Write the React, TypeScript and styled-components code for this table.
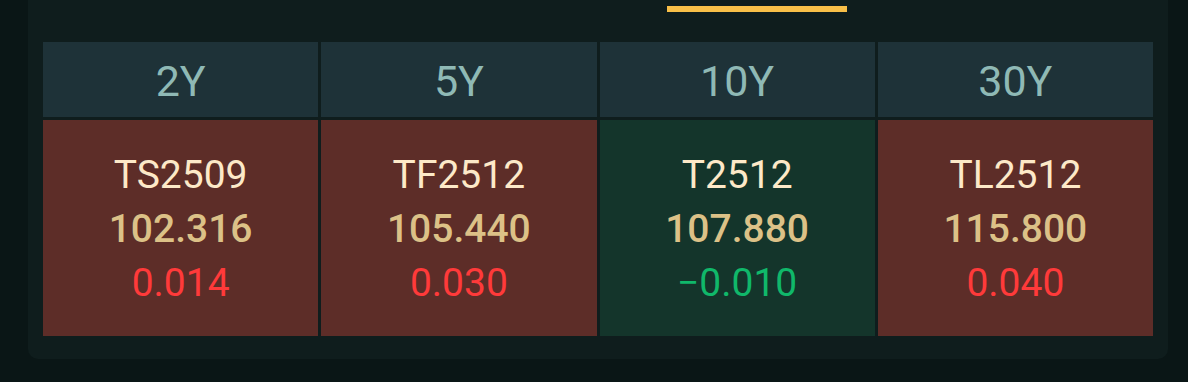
import React from "react";
import styled, { createGlobalStyle } from "styled-components";

const GlobalStyle = createGlobalStyle`
  html, body {
    margin: 0;
    padding: 0;
    background: #0a1616;
    overflow: hidden;
  }
  body {
    font-family: Roboto, "Noto Sans", "Liberation Sans", sans-serif;
  }
`;

const Page = styled.div`
  width: 1188px;
  height: 382px;
  background: #0a1616;
  padding: 0 20px 0 28px;
  box-sizing: border-box;
  overflow: hidden;
`;

const Card = styled.section`
  margin-top: -20px;
  background: #0f1d1d;
  border-radius: 10px;
  padding: 0 15px 23px;
`;

const TabBar = styled.div`
  height: 32px;
  display: flex;
  align-items: flex-end;
  padding-left: 624px;
`;

const Indicator = styled.div`
  width: 180px;
  height: 6px;
  background: #f8bf48;
`;

const Grid = styled.div`
  margin-top: 30px;
  display: grid;
  grid-template-columns: repeat(4, 1fr);
  grid-template-rows: 75px 216px;
  gap: 3px;
`;

const HeadCell = styled.div`
  background: #1e3238;
  display: flex;
  align-items: center;
  justify-content: center;
  font-family: Roboto, "Noto Sans", sans-serif;
  font-size: 43px;
  font-weight: 400;
  color: #8fb9b5;
  padding-top: 2px;
  box-sizing: border-box;
`;

const BodyCell = styled.div<{ $up: boolean }>`
  background: ${(p) => (p.$up ? "#5d2d28" : "#14352b")};
  display: flex;
  flex-direction: column;
  align-items: center;
  justify-content: center;
  line-height: 54px;
  font-size: 39px;
  padding-top: 2px;
  box-sizing: border-box;
`;

const Code = styled.div`
  color: #fde9c8;
  font-weight: 400;
`;

const Price = styled.div`
  color: #dcc187;
  font-weight: 500;
`;

const Change = styled.div<{ $up: boolean }>`
  color: ${(p) => (p.$up ? "#ff3a3a" : "#10b86a")};
  font-weight: 400;
`;

const data = [
  { tenor: "2Y", code: "TS2509", price: "102.316", change: "0.014", up: true },
  { tenor: "5Y", code: "TF2512", price: "105.440", change: "0.030", up: true },
  { tenor: "10Y", code: "T2512", price: "107.880", change: "\u22120.010", up: false },
  { tenor: "30Y", code: "TL2512", price: "115.800", change: "0.040", up: true },
];

export default function App() {
  return (
    <>
      <GlobalStyle />
      <Page>
        <Card>
          <TabBar>
            <Indicator />
          </TabBar>
          <Grid>
            {data.map((d) => (
              <HeadCell key={d.tenor + "h"}>{d.tenor}</HeadCell>
            ))}
            {data.map((d) => (
              <BodyCell key={d.tenor + "b"} $up={d.up}>
                <Code>{d.code}</Code>
                <Price>{d.price}</Price>
                <Change $up={d.up}>{d.change}</Change>
              </BodyCell>
            ))}
          </Grid>
        </Card>
      </Page>
    </>
  );
}
